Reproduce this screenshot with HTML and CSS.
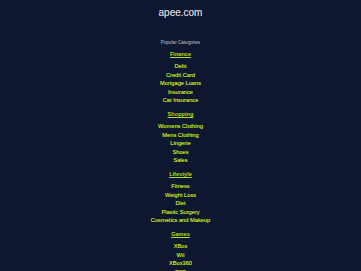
FILE: index.html
```html
<!DOCTYPE html>
<html>
<head>
<meta charset="utf-8">
<title>apee.com</title>
<link rel="stylesheet" href="styles.css">
</head>
<body>
<div class="page">
  <h1 class="site-title">apee.com</h1>
  <div class="popular">Popular Categories</div>
  <div class="category">
    <a class="cat-title" href="#">Finance</a>
    <ul class="links">
      <li><a href="#">Debt</a></li>
      <li><a href="#">Credit Card</a></li>
      <li><a href="#">Mortgage Loans</a></li>
      <li><a href="#">Insurance</a></li>
      <li><a href="#">Car Insurance</a></li>
    </ul>
  </div>
  <div class="category">
    <a class="cat-title" href="#">Shopping</a>
    <ul class="links">
      <li><a href="#">Womens Clothing</a></li>
      <li><a href="#">Mens Clothing</a></li>
      <li><a href="#">Lingerie</a></li>
      <li><a href="#">Shoes</a></li>
      <li><a href="#">Sales</a></li>
    </ul>
  </div>
  <div class="category">
    <a class="cat-title" href="#">Lifestyle</a>
    <ul class="links">
      <li><a href="#">Fitness</a></li>
      <li><a href="#">Weight Loss</a></li>
      <li><a href="#">Diet</a></li>
      <li><a href="#">Plastic Surgery</a></li>
      <li><a href="#">Cosmetics and Makeup</a></li>
    </ul>
  </div>
  <div class="category">
    <a class="cat-title" href="#">Games</a>
    <ul class="links">
      <li><a href="#">XBox</a></li>
      <li><a href="#">Wii</a></li>
      <li><a href="#">XBox360</a></li>
      <li><a href="#">PS3</a></li>
    </ul>
  </div>
</div>
</body>
</html>
```
FILE: styles.css
```css
html, body {
  margin: 0;
  padding: 0;
  background: #0f1730;
}
.page {
  font-family: "Liberation Sans", Arial, sans-serif;
  text-align: center;
  display: flex;
  flex-direction: column;
  align-items: center;
}
.site-title {
  margin: 0;
  font-size: 10px;
  font-weight: normal;
  line-height: 25px;
  color: #c4c7cc;
  text-shadow: 0 0 0.4px #c4c7cc;
}
.popular {
  margin-top: 15px;
  font-size: 4.6px;
  line-height: 6px;
  color: #c0c3ca;
}
.category {
  display: flex;
  flex-direction: column;
  align-items: center;
}
.cat-title {
  margin-top: 4px;
  font-size: 5.6px;
  font-weight: bold;
  line-height: 8px;
  color: #b6dc1e;
  text-decoration: underline;
}
.category + .category .cat-title {
  margin-top: 5.3px;
}
.links {
  list-style: none;
  margin: 4.25px 0 0 0;
  padding: 0;
}
.links li {
  font-size: 5.7px;
  line-height: 8.5px;
}
.links a {
  color: #b6dc1e;
  text-decoration: none;
  text-shadow: 0 0 0.3px #b6dc1e;
}
```
